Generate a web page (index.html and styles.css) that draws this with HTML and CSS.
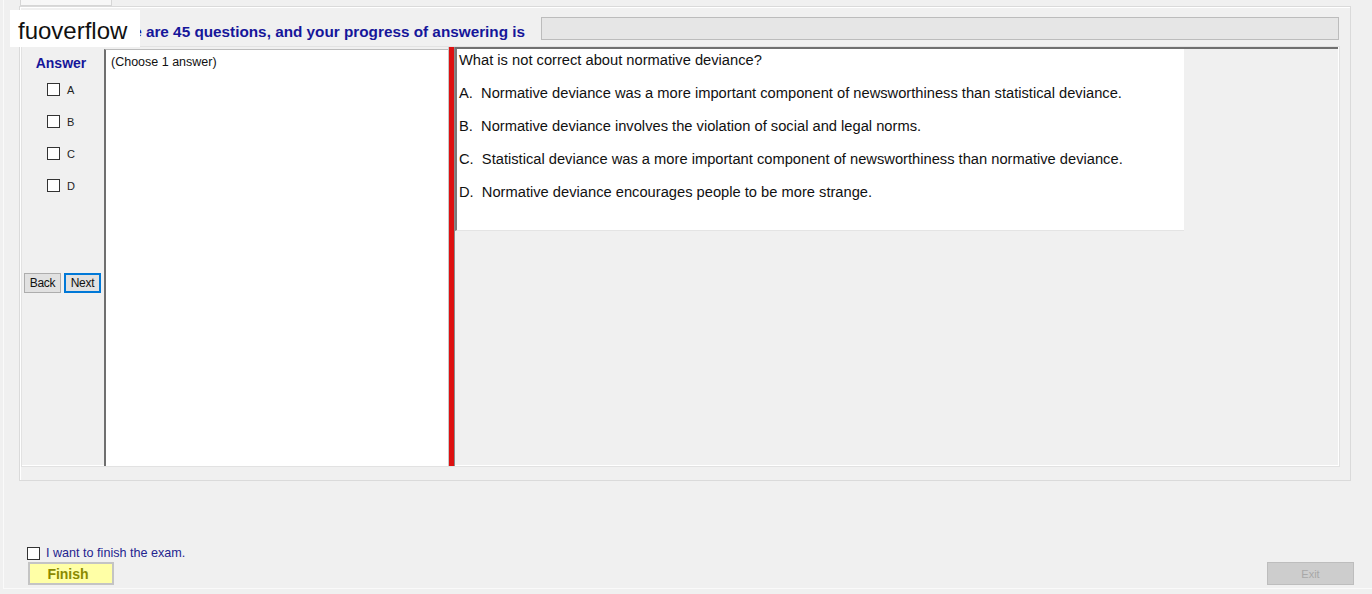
FILE: index.html
```html
<!DOCTYPE html>
<html lang="en">
<head>
    <meta charset="UTF-8">
    <title>Exam</title>
    <link rel="stylesheet" href="styles.css">
</head>
<body>
    <div class="frame">
        <div class="tabs"><div class="tab"></div></div>

        <div class="group">
            <!-- header: progress -->
            <div class="header">
                <span class="header-text">There are 45 questions, and your progress of answering is</span>
                <div class="progress"></div>
            </div>

            <div class="main">
                <div class="answer-col">
                    <div class="answer-title">Answer</div>
                    <div class="opt"><span class="box"></span>A</div>
                    <div class="opt"><span class="box"></span>B</div>
                    <div class="opt"><span class="box"></span>C</div>
                    <div class="opt"><span class="box"></span>D</div>
                    <div class="nav">
                        <button class="btn">Back</button>
                        <button class="btn btn-next">Next</button>
                    </div>
                </div>

                <div class="choice-panel">(Choose 1 answer)</div>

                <div class="splitter"></div>

                <div class="question-area">
                    <div class="question">
                        <p>What is not correct about normative deviance?</p>
                        <p>A.&nbsp; Normative deviance was a more important component of newsworthiness than statistical deviance.</p>
                        <p>B.&nbsp; Normative deviance involves the violation of social and legal norms.</p>
                        <p>C.&nbsp; Statistical deviance was a more important component of newsworthiness than normative deviance.</p>
                        <p>D.&nbsp; Normative deviance encourages people to be more strange.</p>
                    </div>
                </div>
            </div>
        </div>

        <div class="footer">
            <div class="finish-col">
                <label class="finish-check"><span class="box"></span>I want to finish the exam.</label>
                <button class="finish-btn">Finish</button>
            </div>
            <button class="exit-btn">Exit</button>
        </div>
    </div>

    <div class="watermark">fuoverflow</div>
</body>
</html>
```

FILE: styles.css
```css
body {
    margin: 0;
    background-color: #f0f0f0;
    font-family: "Liberation Sans", Arial, sans-serif;
    color: #000;
    width: 1372px;
    height: 594px;
    overflow: hidden;
}
.frame {
    margin-left: 3px;
    height: 588px;
    border-left: 1px solid #fafafa;
    border-bottom: 1px solid #fafafa;
}
.tabs {
    height: 6px;
}
.tab {
    margin-left: 16px;
    width: 90px;
    height: 5px;
    background-color: #f7f7f7;
    border: 1px solid #d6d6d6;
    border-top: none;
}
.group {
    margin-left: 15px;
    width: 1330px;
    height: 473px;
    border: 1px solid #dadada;
    box-shadow: inset 1px 1px 0 #fff;
}
.header {
    display: flex;
    align-items: center;
    height: 23px;
    margin-top: 10px;
    padding-left: 80px;
}
.header-text {
    color: #16169a;
    font-weight: bold;
    font-size: 15.3px;
    padding-top: 7px;
}
.progress {
    margin-left: auto;
    margin-right: 11px;
    width: 796px;
    height: 21px;
    background-color: #e6e6e6;
    border: 1px solid #bcbcbc;
}
/* main area */
.main {
    display: flex;
    margin-top: 6px;
    margin-left: 1px;
    width: 1317px;
    height: 419px;
    border: 1px solid #e2e2e2;
    box-shadow: inset -1px -1px 0 #fff;
}
.answer-col {
    width: 82px;
    display: flex;
    flex-direction: column;
}
.answer-title {
    color: #16169a;
    font-weight: bold;
    font-size: 14px;
    text-align: center;
    margin-top: 8px;
    margin-right: 4px;
    height: 17px;
}
.opt {
    display: flex;
    align-items: center;
    font-size: 11px;
    height: 13px;
    margin-top: 19px;
    padding-left: 25px;
    color: #222;
}
.opt:nth-child(2) {
    margin-top: 11px;
}
.box {
    display: inline-block;
    width: 11px;
    height: 11px;
    border: 1px solid #333;
    background-color: #fff;
    margin-right: 7px;
}
.nav {
    display: flex;
    gap: 3px;
    margin-top: 81px;
    padding-left: 2px;
}
.btn {
    width: 37px;
    height: 20px;
    padding: 0;
    font-family: inherit;
    font-size: 12px;
    letter-spacing: -0.3px;
    color: #111;
    background-color: #e1e1e1;
    border: 1px solid #adadad;
}
.btn-next {
    border: 2px solid #0078d7;
}
.choice-panel {
    margin-top: 2px;
    background-color: #fff;
    border-top: 1px solid #bcbcbc;
    border-left: 2px solid #6f6f6f;
    padding: 5px 0 0 5px;
    font-size: 12.5px;
    color: #111;
    box-sizing: border-box;
    width: 344px;
}
.splitter {
    width: 5px;
    background-color: #dd1010;
    border-left: 1px solid #c8c8c8;
    border-right: 1px solid #8a8a8a;
}
.question-area {
    flex: 1;
    border-top: 2px solid #707070;
    margin-right: 1px;
}
.question {
    width: 729px;
    height: 182px;
    background-color: #fff;
    border-left: 2px solid #7a7a7a;
    border-bottom: 1px solid #e4e4e4;
    padding-left: 2px;
    box-sizing: border-box;
    font-size: 14.7px;
    color: #111;
}
.question p {
    margin: 0;
    padding-top: 4px;
    height: 29px;
    line-height: 17px;
}
.question p:first-child {
    padding-top: 3px;
}
/* footer */
.footer {
    display: flex;
    align-items: flex-end;
    justify-content: space-between;
    margin-top: 62px;
    padding-left: 23px;
    padding-right: 18px;
}
.finish-col {
    display: flex;
    flex-direction: column;
}
.finish-check {
    display: flex;
    align-items: center;
    font-size: 12.6px;
    color: #24248f;
    height: 14px;
    padding-top: 3px;
}
.finish-check .box {
    margin-right: 6px;
}
.finish-btn {
    margin-top: 2px;
    margin-left: 1px;
    width: 86px;
    height: 23px;
    padding: 0 6px 0 0;
    font-family: inherit;
    font-size: 14px;
    font-weight: bold;
    color: #8a8a00;
    background-color: #ffffa6;
    border: 2px solid #c4c4c4;
}
.exit-btn {
    width: 87px;
    height: 23px;
    padding: 0;
    font-family: inherit;
    font-size: 11px;
    color: #a8a8a8;
    background-color: #cdcdcd;
    border: 1px solid #bdbdbd;
}
.watermark {
    position: absolute;
    left: 10px;
    top: 10px;
    width: 130px;
    height: 37px;
    background-color: #fff;
    font-size: 24px;
    line-height: 42px;
    padding-left: 8px;
    box-sizing: border-box;
    color: #111;
}
```
